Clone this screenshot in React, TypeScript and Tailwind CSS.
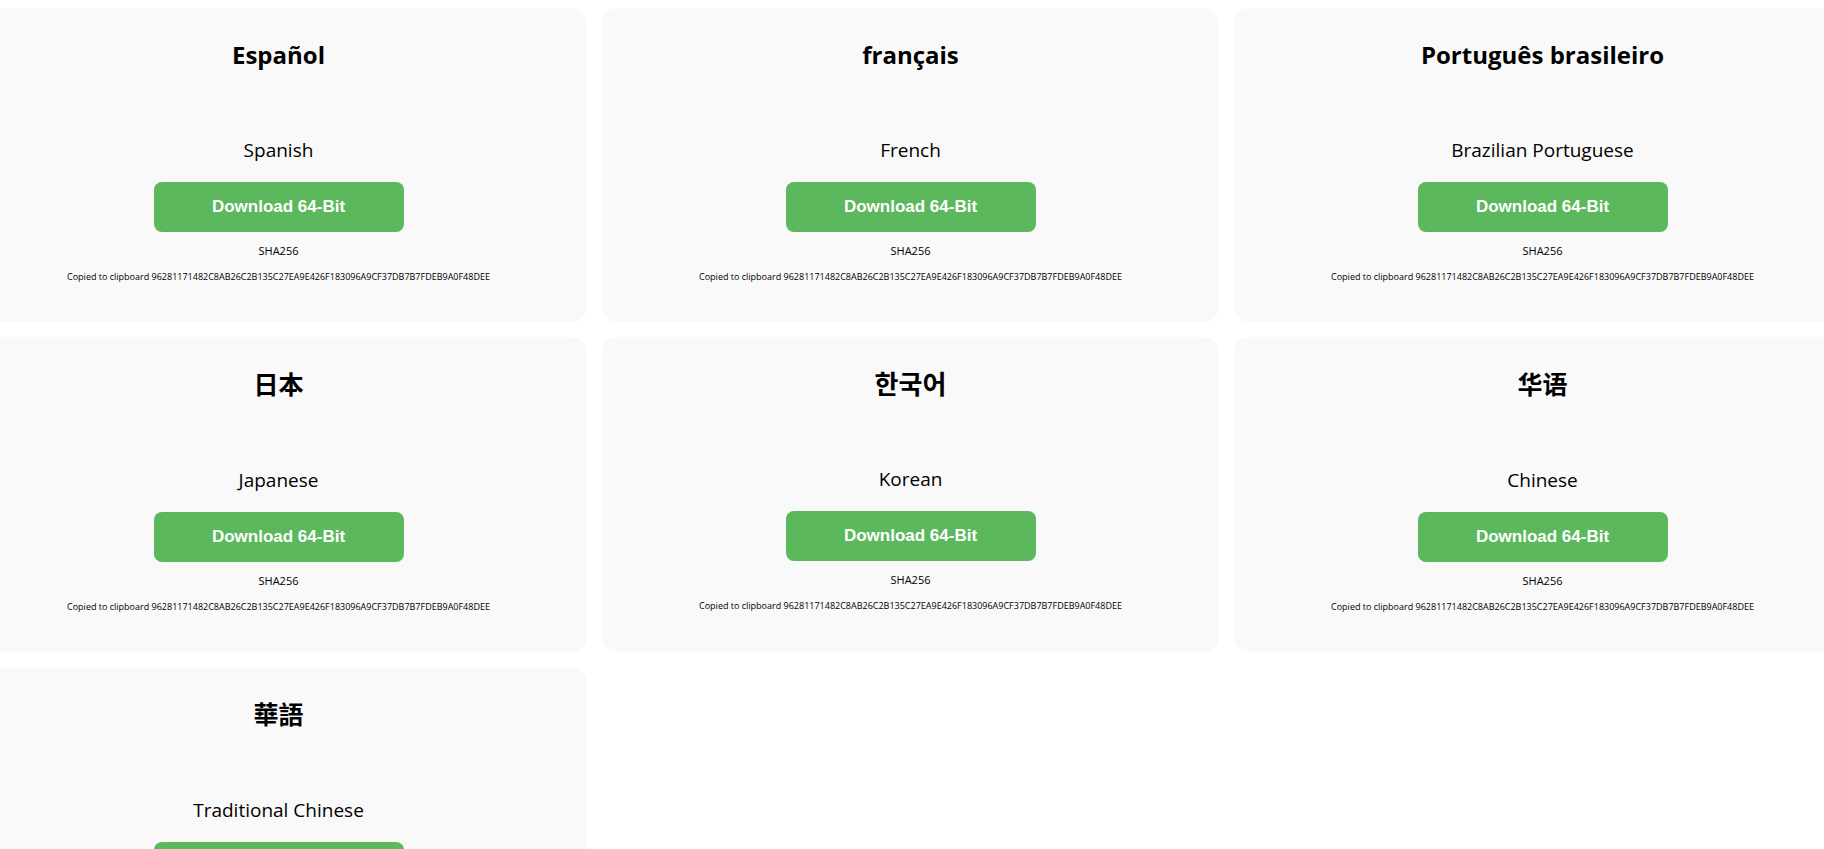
type Edition = {
  lang: string;
  title: string;
  name: string;
  titleClass: string;
};

const HASH = "96281171482C8AB26C2B135C27EA9E426F183096A9CF37DB7B7FDEB9A0F48DEE";

const latin = "text-[24px] leading-[34px] font-['Open_Sans','Noto_Sans',sans-serif]";

const editions: Edition[] = [
  { lang: "es", title: "Español", name: "Spanish", titleClass: latin },
  { lang: "fr", title: "français", name: "French", titleClass: latin },
  { lang: "pt-BR", title: "Português brasileiro", name: "Brazilian Portuguese", titleClass: latin },
  {
    lang: "ja",
    title: "日本",
    name: "Japanese",
    titleClass: "text-[25px] leading-[33px] pb-[2px] font-['Noto_Sans_CJK_JP',sans-serif]",
  },
  {
    lang: "ko",
    title: "한국어",
    name: "Korean",
    titleClass: "text-[26px] leading-[32px] pb-[2px] font-['Noto_Sans_CJK_KR',sans-serif]",
  },
  {
    lang: "zh-Hans",
    title: "华语",
    name: "Chinese",
    titleClass: "text-[25px] leading-[33px] pb-[2px] font-['Noto_Sans_CJK_SC',sans-serif]",
  },
  {
    lang: "zh-Hant",
    title: "華語",
    name: "Traditional Chinese",
    titleClass: "text-[25px] leading-[33px] pb-[2px] font-['Noto_Sans_CJK_TC',sans-serif]",
  },
];

function DownloadCard({ edition }: { edition: Edition }) {
  return (
    <article className="flex flex-col items-center rounded-[15px] bg-[#f9f9f9] px-4 pt-[30px] pb-[38px] text-center">
      <h2 lang={edition.lang} className={`font-bold ${edition.titleClass}`}>
        {edition.title}
      </h2>
      <p className="mt-[65px] text-[19px] leading-[27px]">{edition.name}</p>
      <button
        type="button"
        className="mt-[18px] h-[50px] w-[250px] cursor-pointer rounded-lg bg-[#5cb85c] font-['Liberation_Sans',Arial,sans-serif] text-[17px] font-bold text-white"
      >
        Download 64-Bit
      </button>
      <p className="mt-[11px] text-[11px] leading-4">SHA256</p>
      <p className="mt-[11px] text-[9px] leading-[14px]">Copied to clipboard {HASH}</p>
    </article>
  );
}

export default function App() {
  return (
    <main className="h-screen overflow-x-hidden overflow-y-auto bg-white pt-2 font-['Open_Sans','Noto_Sans',sans-serif] text-black [scrollbar-width:none]">
      <div className="-mr-[27px] -ml-[30px] grid grid-cols-3 gap-[15px]">
        {editions.map((edition) => (
          <DownloadCard key={edition.lang} edition={edition} />
        ))}
      </div>
    </main>
  );
}
